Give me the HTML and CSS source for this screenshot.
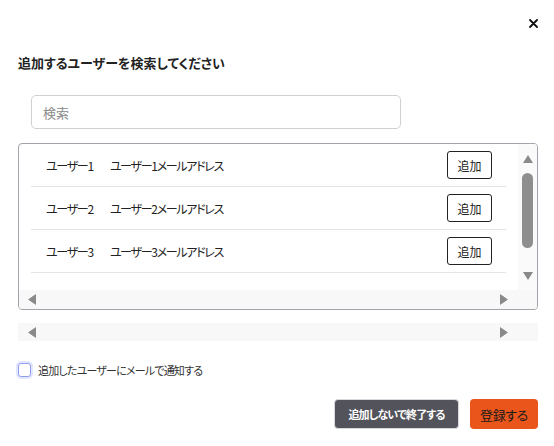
FILE: index.html
```html
<!DOCTYPE html>
<html lang="ja">
<head>
<meta charset="utf-8">
<title>ユーザー追加</title>
<link rel="stylesheet" href="styles.css">
</head>
<body>
<div class="dialog">
  <div class="header">
    <svg class="close" width="9" height="9" viewBox="0 0 9 9"><path d="M1 1 L8 8 M8 1 L1 8" stroke="#111" stroke-width="1.8" stroke-linecap="round"/></svg>
  </div>
  <div class="title">追加するユーザーを検索してください</div>
  <div class="search"><span class="placeholder">検索</span></div>
  <div class="listbox">
    <div class="list-top">
      <div class="rows">
        <div class="row"><span class="name">ユーザー1</span><span class="mail">ユーザー1メールアドレス</span><button class="add">追加</button></div>
        <div class="row"><span class="name">ユーザー2</span><span class="mail">ユーザー2メールアドレス</span><button class="add">追加</button></div>
        <div class="row"><span class="name">ユーザー3</span><span class="mail">ユーザー3メールアドレス</span><button class="add">追加</button></div>
        <div class="row"></div>
      </div>
      <div class="vscroll">
        <svg class="arr-up" width="10" height="8" viewBox="0 0 10 8"><path d="M5 0 L10 8 L0 8 Z" fill="#8a8a8a"/></svg>
        <div class="thumb"></div>
        <svg class="arr-down" width="10" height="8" viewBox="0 0 10 8"><path d="M0 0 L10 0 L5 8 Z" fill="#8a8a8a"/></svg>
      </div>
    </div>
    <div class="hscroll inner">
      <svg width="8" height="11" viewBox="0 0 8 11"><path d="M0 5.5 L8 0 L8 11 Z" fill="#8a8a8a"/></svg>
      <svg width="8" height="11" viewBox="0 0 8 11"><path d="M0 0 L8 5.5 L0 11 Z" fill="#8a8a8a"/></svg>
    </div>
  </div>
  <div class="hscroll outer">
    <svg width="8" height="11" viewBox="0 0 8 11"><path d="M0 5.5 L8 0 L8 11 Z" fill="#8a8a8a"/></svg>
    <svg width="8" height="11" viewBox="0 0 8 11"><path d="M0 0 L8 5.5 L0 11 Z" fill="#8a8a8a"/></svg>
  </div>
  <label class="notify"><span class="check"></span><span>追加したユーザーにメールで通知する</span></label>
  <div class="actions">
    <button class="btn-cancel">追加しないで終了する</button>
    <button class="btn-submit">登録する</button>
  </div>
</div>
</body>
</html>
```

FILE: styles.css
```css
* { box-sizing: border-box; }
html, body { margin: 0; padding: 0; background: #fff; }
body {
  font-family: "Noto Sans CJK JP", "Noto Sans", sans-serif;
  font-feature-settings: "palt";
  color: #222;
  width: 554px;
  height: 446px;
  overflow: hidden;
}
.dialog { padding: 0 16px 0 18px; }
.header {
  height: 52px;
  display: flex;
  justify-content: flex-end;
  align-items: flex-start;
  padding-top: 19px;
}
.close { display: block; }
.title {
  font-size: 13px;
  font-weight: bold;
  line-height: 21px;
  height: 21px;
  color: #222;
}
.search {
  margin: 22px 0 0 13px;
  width: 370px;
  height: 34px;
  border: 1px solid #cfcfd4;
  border-radius: 5px;
  display: flex;
  align-items: center;
  padding-left: 11px;
}
.placeholder { font-size: 13px; color: #8a8a8a; }
.listbox {
  margin-top: 14px;
  width: 520px;
  height: 167px;
  border: 1px solid #a3a3ab;
  border-radius: 4px;
  overflow: hidden;
  display: flex;
  flex-direction: column;
}
.list-top {
  display: flex;
  height: 146px;
}
.rows {
  width: 499px;
  height: 146px;
  overflow: hidden;
  padding-left: 12px;
  padding-right: 12px;
}
.row {
  height: 43px;
  border-bottom: 1px solid #e4e4e4;
  display: flex;
  align-items: center;
  padding: 0 14px 0 15px;
  font-size: 12px;
  letter-spacing: -1.3px;
  color: #222;
}
.row .name { margin-right: 17px; }
.row .mail { flex: 1; }
.add {
  width: 45px;
  height: 28px;
  border: 1px solid #222;
  border-radius: 3px;
  background: #fff;
  font-family: inherit;
  font-feature-settings: "palt";
  font-size: 12px;
  letter-spacing: 0;
  color: #222;
  padding: 0;
}
.vscroll {
  width: 19px;
  background: #fafafa;
  display: flex;
  flex-direction: column;
  align-items: center;
  padding-top: 11px;
}
.vscroll svg { display: block; }
.thumb {
  margin-top: 10px;
  width: 11px;
  height: 75px;
  border-radius: 6px;
  background: #8e8e8e;
}
.arr-down { margin-top: 24px; }
.hscroll {
  display: flex;
  align-items: center;
  background: #f8f8f8;
}
.hscroll svg { display: block; }
.hscroll.inner {
  height: 19px;
  padding-left: 9px;
  padding-right: 29px;
  justify-content: space-between;
}
.hscroll.outer {
  margin-top: 13px;
  width: 520px;
  height: 18px;
  padding-left: 10px;
  padding-right: 30px;
  justify-content: space-between;
}
.notify {
  margin-top: 22px;
  display: flex;
  align-items: center;
  height: 14px;
  font-size: 11px;
  letter-spacing: -0.8px;
  color: #333;
}
.check {
  width: 13px;
  height: 14px;
  border: 1px solid #8f9df0;
  border-radius: 3px;
  box-shadow: 0 0 0 2px #e2e7ff;
  margin-right: 7px;
  background: #fff;
}
.actions {
  margin-top: 22px;
  display: flex;
  justify-content: flex-end;
  gap: 11px;
}
.actions button {
  font-family: inherit;
  font-feature-settings: "palt";
  height: 30px;
  border-radius: 4px;
  padding: 0;
}
.btn-cancel {
  width: 125px;
  background: #53535b;
  border: 1px solid #d8d8de;
  color: #fff;
  font-weight: bold;
  font-size: 11px;
  letter-spacing: -0.9px;
}
.btn-submit {
  width: 68px;
  background: #e9551a;
  border: none;
  color: #1a1a1a;
  font-size: 13px;
  letter-spacing: -0.4px;
}
```
